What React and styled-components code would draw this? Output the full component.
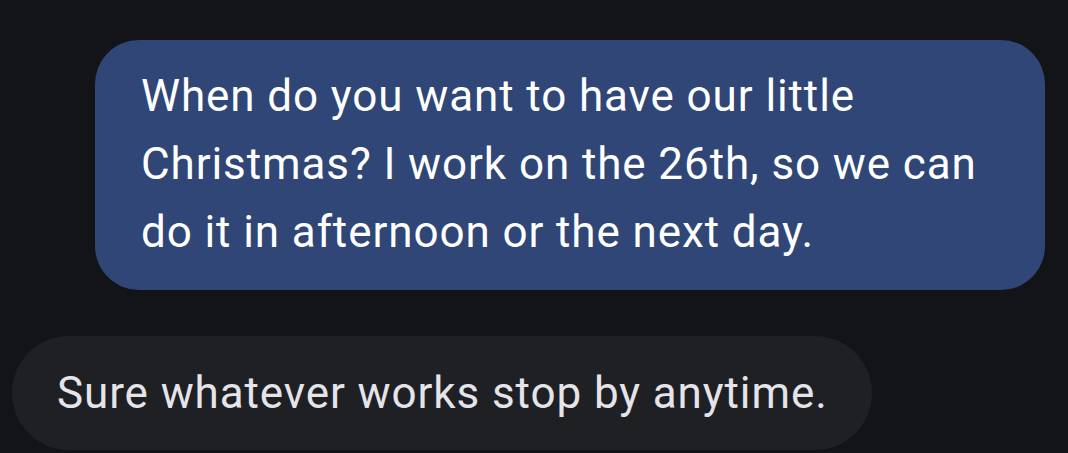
import React from 'react';
import styled, { createGlobalStyle } from 'styled-components';

const GlobalStyle = createGlobalStyle`
  html, body {
    margin: 0;
    padding: 0;
    background: #131418;
  }
  body {
    font-family: Roboto, "Noto Sans", "Liberation Sans", sans-serif;
  }
`;

const Thread = styled.div`
  display: flex;
  flex-direction: column;
  gap: 46px;
  padding: 40px 23px 0 12px;
  min-height: 453px;
  box-sizing: border-box;
  overflow: hidden;
`;

const Bubble = styled.div`
  box-sizing: border-box;
  align-self: ${(p) => (p.$mine ? 'flex-end' : 'flex-start')};
  width: ${(p) => (p.$mine ? '950px' : 'auto')};
  padding: ${(p) => (p.$mine ? '22px 46px 24px 46px' : '23px 44px 23px 45px')};
  border-radius: ${(p) => (p.$mine ? '44px' : '57px')};
  background: ${(p) => (p.$mine ? '#2f4677' : '#1f2024')};
  color: ${(p) => (p.$mine ? '#ffffff' : '#e4e4e9')};
  font-size: 44px;
  line-height: 68px;
  letter-spacing: 0.9px;
`;

const messages = [
  {
    id: 1,
    mine: true,
    text: 'When do you want to have our little Christmas? I work on the 26th, so we can do it in afternoon or the next day.',
  },
  {
    id: 2,
    mine: false,
    text: 'Sure whatever works stop by anytime.',
  },
];

const App = () => {
  return (
    <>
      <GlobalStyle />
      <Thread>
        {messages.map((m) => (
          <Bubble key={m.id} $mine={m.mine}>
            {m.text}
          </Bubble>
        ))}
      </Thread>
    </>
  );
};

export default App;
